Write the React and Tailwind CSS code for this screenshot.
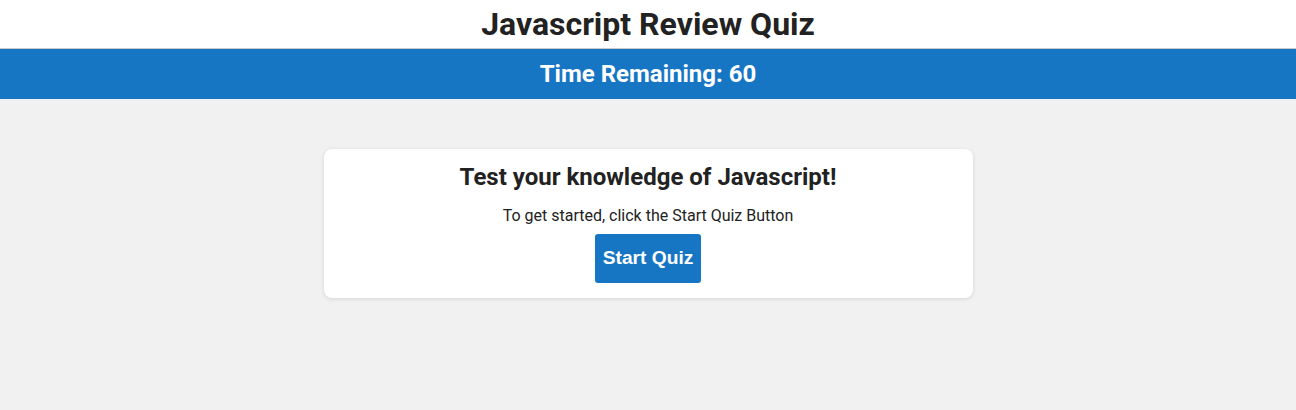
import React from 'react'

const App = () => {
  return (
    <div className="min-h-screen bg-[#f1f1f1] font-['Roboto',sans-serif] text-[#222]">
      {/* Header */}
      <header className="bg-white h-[49px] border-b border-[#c8c8c8] flex items-center justify-center">
        <h1 className="text-[32px] leading-[40px] font-bold">Javascript Review Quiz</h1>
      </header>

      {/* Timer bar */}
      <div className="bg-[#1776c3] h-[50px] flex items-center justify-center">
        <h2 className="text-white text-[24px] leading-[28px] font-bold">Time Remaining: 60</h2>
      </div>

      {/* Intro card */}
      <main className="flex justify-center pt-[50px]">
        <div className="w-[649px] bg-white rounded-lg shadow-[0_1px_4px_rgba(0,0,0,0.12)] pt-[14px] pb-[15px] flex flex-col items-center">
          <h3 className="text-[24px] leading-[28px] font-bold">Test your knowledge of Javascript!</h3>
          <p className="mt-[15px] text-[16px] leading-[20px]">To get started, click the Start Quiz Button</p>
          <button className="mt-[8px] w-[106px] h-[49px] bg-[#1776c3] text-white rounded-[3px] font-['Liberation_Sans',Arial,sans-serif] font-bold text-[19.2px]">
            Start Quiz
          </button>
        </div>
      </main>
    </div>
  )
}

export default App
